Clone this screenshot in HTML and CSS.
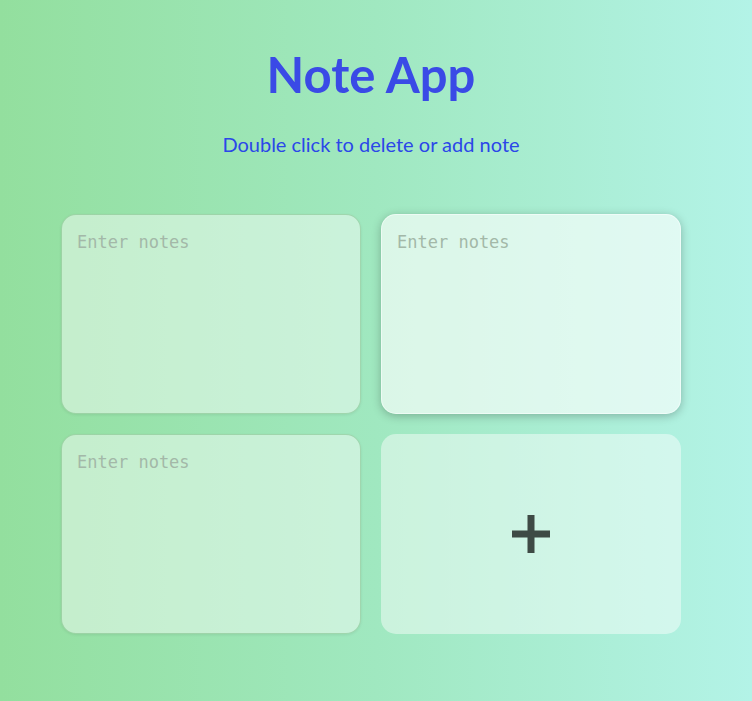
FILE: index.html
```html
<!DOCTYPE html>
<html>
<head>
<meta charset="utf-8">
<link rel="stylesheet" href="styles.css">
</head>
<body>
<main class="app">
  <h1 class="title">Note App</h1>
  <p class="subtitle">Double click to delete or add note</p>
  <div class="notes">
    <textarea class="note" placeholder="Enter notes"></textarea>
    <textarea class="note note-focus" placeholder="Enter notes"></textarea>
    <textarea class="note" placeholder="Enter notes"></textarea>
    <button class="add-btn" aria-label="Add note">
      <svg width="38" height="38" viewBox="0 0 38 38"><path d="M19 0v38M0 19h38" stroke="#3e4a45" stroke-width="7"/></svg>
    </button>
  </div>
</main>
</body>
</html>
```
FILE: styles.css
```css
html, body {
  margin: 0;
  height: 100%;
}
body {
  background: linear-gradient(90deg, #93df9e 0%, #a0e8c0 50%, #b3f3e7 100%);
  font-family: "Lato", "Open Sans", sans-serif;
  padding-right: 10px;
  box-sizing: border-box;
}
.app {
  display: flex;
  flex-direction: column;
  align-items: center;
  padding-top: 40px;
}
.title {
  margin: 0;
  font-size: 49px;
  font-weight: 700;
  color: #3a4ae6;
  line-height: 68px;
}
.subtitle {
  margin: 24px 0 0;
  font-size: 20px;
  color: #2b47e8;
  line-height: 24px;
}
.notes {
  margin-top: 58px;
  display: grid;
  grid-template-columns: 300px 300px;
  grid-auto-rows: 200px;
  gap: 20px;
}
.note {
  box-sizing: border-box;
  width: 300px;
  height: 200px;
  resize: none;
  border: 1px solid rgba(80, 160, 90, 0.35);
  border-radius: 15px;
  background: rgba(255, 255, 255, 0.45);
  padding: 17px 15px 15px;
  font-family: "DejaVu Sans Mono", "Liberation Mono", monospace;
  font-size: 17px;
  color: #333;
  outline: none;
  box-shadow: 0 1px 3px rgba(0, 0, 0, 0.08);
}
.note::placeholder {
  color: #a3b8a8;
}
.note-focus {
  background: rgba(255, 255, 255, 0.62);
  border-color: rgba(255, 255, 255, 0.5);
  box-shadow: 0 2px 10px rgba(0, 0, 0, 0.25);
}
.add-btn {
  border: none;
  border-radius: 15px;
  background: rgba(255, 255, 255, 0.45);
  display: flex;
  align-items: center;
  justify-content: center;
  padding: 0;
  cursor: pointer;
}
```
